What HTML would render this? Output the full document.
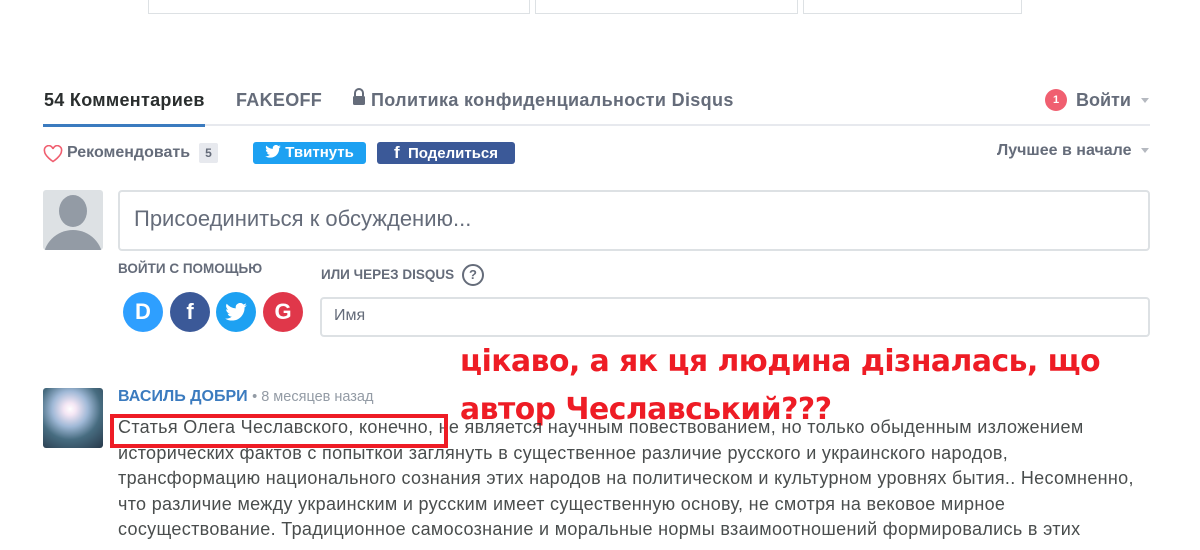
<!DOCTYPE html>
<html><head><meta charset="utf-8"><style>
body{margin:0;width:1200px;height:550px;background:#fff;font-family:"Liberation Sans",Arial,sans-serif;position:relative;overflow:hidden}
.a{position:absolute;white-space:nowrap}
.box{position:absolute;top:-2px;height:15px;border:1px solid #dde1e4;border-top:none}
.b{font-weight:bold}
.g{color:#656c7a}
.txt{position:absolute;left:118px;top:415px;font-size:18px;line-height:25.5px;color:#2a2e2e;opacity:.85;letter-spacing:0.32px}
.circ{position:absolute;top:292px;width:40px;height:40px;border-radius:50%;color:#fff;font-weight:bold;font-size:22px;text-align:center;line-height:40px}
</style></head><body>
<div class="box" style="left:148px;width:380px"></div>
<div class="box" style="left:535px;width:261px"></div>
<div class="box" style="left:803px;width:217px"></div>

<div class="a b" style="left:44px;top:90px;font-size:18px;color:#2a2e2e;letter-spacing:.3px">54 Комментариев</div>
<div class="a b g" style="left:236px;top:90px;font-size:18px;letter-spacing:.3px">FAKEOFF</div>
<svg class="a" style="left:352px;top:88px" width="14" height="18" viewBox="0 0 14 18"><path d="M3 8V5a4 4 0 0 1 8 0v3" fill="none" stroke="#656c7a" stroke-width="2"/><rect x="1" y="8" width="12" height="9" rx="1.5" fill="#656c7a"/></svg>
<div class="a b g" style="left:371px;top:90px;font-size:18px;letter-spacing:.35px">Политика конфиденциальности Disqus</div>
<div class="a" style="left:1045px;top:89px;width:22px;height:22px;border-radius:50%;background:#f05f70;color:#fff;font-size:11px;font-weight:bold;text-align:center;line-height:22px">1</div>
<div class="a b g" style="left:1076px;top:90px;font-size:18px">Войти</div>
<div class="a" style="left:1141px;top:98px;border:4px solid transparent;border-top:5px solid #b5b9c0"></div>
<div class="a" style="left:43px;top:124px;width:1107px;height:2px;background:#e7e9ee"></div>
<div class="a" style="left:43px;top:124px;width:162px;height:3px;background:#3b7bbf"></div>

<svg class="a" style="left:43px;top:145px" width="20" height="18" viewBox="0 0 20 18"><path d="M10 16.5S1.5 11 1.5 6A4.3 4.3 0 0 1 10 4a4.3 4.3 0 0 1 8.5 2c0 5-8.5 10.5-8.5 10.5z" fill="none" stroke="#f05f70" stroke-width="1.6"/></svg>
<div class="a b g" style="left:67px;top:144px;font-size:16px">Рекомендовать</div>
<div class="a b g" style="left:199px;top:143px;width:19px;height:20px;background:#e7e9ee;border-radius:2px;font-size:12px;text-align:center;line-height:20px">5</div>
<div class="a b" style="left:253px;top:142px;width:113px;height:22px;background:#1da1f2;border-radius:3px;color:#fff;font-size:15px;line-height:22px;text-align:center"><svg width="16" height="13" viewBox="0 0 24 20" style="vertical-align:-1px"><path fill="#fff" d="M24 2.4a10 10 0 0 1-2.8.8A5 5 0 0 0 23.3.4a10 10 0 0 1-3.1 1.2A4.9 4.9 0 0 0 11.8 6 14 14 0 0 1 1.7.9a4.9 4.9 0 0 0 1.5 6.6A4.9 4.9 0 0 1 1 6.9a4.9 4.9 0 0 0 3.9 4.8 5 5 0 0 1-2.2.1 4.9 4.9 0 0 0 4.6 3.4A9.9 9.9 0 0 1 0 17.3 14 14 0 0 0 7.5 19.5c9.1 0 14-7.5 14-14v-.6A10 10 0 0 0 24 2.4z"/></svg> Твитнуть</div>
<div class="a b" style="left:377px;top:142px;width:138px;height:22px;background:#3b5998;border-radius:3px;color:#fff;font-size:15px;line-height:22px;text-align:center"><span style="font-size:17px">f</span>&nbsp; Поделиться</div>
<div class="a b g" style="left:997px;top:142px;font-size:16px">Лучшее в начале</div>
<div class="a" style="left:1141px;top:148px;border:4px solid transparent;border-top:5px solid #b5b9c0"></div>

<div class="a" style="left:43px;top:190px;width:60px;height:60px;background:#dde1e4;border-radius:3px;overflow:hidden">
<div class="a" style="left:16px;top:5px;width:28px;height:32px;border-radius:50%;background:#939ba5"></div>
<div class="a" style="left:0;top:40px;width:60px;height:40px;border-radius:30px 30px 0 0;background:#939ba5"></div></div>
<div class="a" style="left:118px;top:190px;width:1028px;height:57px;border:2px solid #dde1e4;border-radius:4px"></div>
<div class="a g" style="left:134px;top:206px;font-size:22px">Присоединиться к обсуждению...</div>

<div class="a b g" style="left:118px;top:261px;font-size:13.5px">ВОЙТИ С ПОМОЩЬЮ</div>
<div class="circ" style="left:123px;background:#2e9fff">D</div>
<div class="circ" style="left:170px;background:#3b5998">f</div>
<div class="circ" style="left:216px;background:#1da1f2"><svg width="22" height="18" viewBox="0 0 24 20" style="margin-top:11px"><path fill="#fff" d="M24 2.4a10 10 0 0 1-2.8.8A5 5 0 0 0 23.3.4a10 10 0 0 1-3.1 1.2A4.9 4.9 0 0 0 11.8 6 14 14 0 0 1 1.7.9a4.9 4.9 0 0 0 1.5 6.6A4.9 4.9 0 0 1 1 6.9a4.9 4.9 0 0 0 3.9 4.8 5 5 0 0 1-2.2.1 4.9 4.9 0 0 0 4.6 3.4A9.9 9.9 0 0 1 0 17.3 14 14 0 0 0 7.5 19.5c9.1 0 14-7.5 14-14v-.6A10 10 0 0 0 24 2.4z"/></svg></div>
<div class="circ" style="left:263px;background:#e0374a">G</div>
<div class="a b g" style="left:321px;top:267px;font-size:13.5px">ИЛИ ЧЕРЕЗ DISQUS</div>
<div class="a b g" style="left:462px;top:264px;width:18px;height:18px;border:2px solid #656c7a;border-radius:50%;font-size:13px;text-align:center;line-height:18px">?</div>
<div class="a" style="left:320px;top:297px;width:826px;height:36px;border:2px solid #dde1e4;border-radius:4px"></div>
<div class="a g" style="left:334px;top:307px;font-size:16px">Имя</div>

<div class="a b" style="left:460px;top:338px;font-size:29.8px;line-height:48px;color:#ee1c25;font-family:'DejaVu Sans',sans-serif;letter-spacing:-0.5px">цікаво, а як ця людина дізналась, що<br>автор Чеславський???</div>

<div class="a" style="left:43px;top:388px;width:60px;height:60px;border-radius:3px;background:radial-gradient(circle at 45% 35%,#fff 0,#f4e6f4 12%,#9fb8d6 35%,#476c80 60%,#27384a 100%)"></div>
<div class="a" style="left:118px;top:388px;font-size:16px"><b style="color:#3b7bbf">ВАСИЛЬ ДОБРИ</b> <span style="color:#939ba5;font-size:14.5px">• 8 месяцев назад</span></div>
<div class="txt">Статья Олега Чеславского, конечно, не является научным повествованием, но только обыденным изложением<br>исторических фактов с попыткой заглянуть в существенное различие русского и украинского народов,<br>трансформацию национального сознания этих народов на политическом и культурном уровнях бытия.. Несомненно,<br>что различие между украинским и русским имеет существенную основу, не смотря на вековое мирное<br>сосуществование. Традиционное самосознание и моральные нормы взаимоотношений формировались в этих</div>
<div class="a" style="left:110px;top:414px;width:330px;height:26px;border:4px solid #ee1c25"></div>
</body></html>
